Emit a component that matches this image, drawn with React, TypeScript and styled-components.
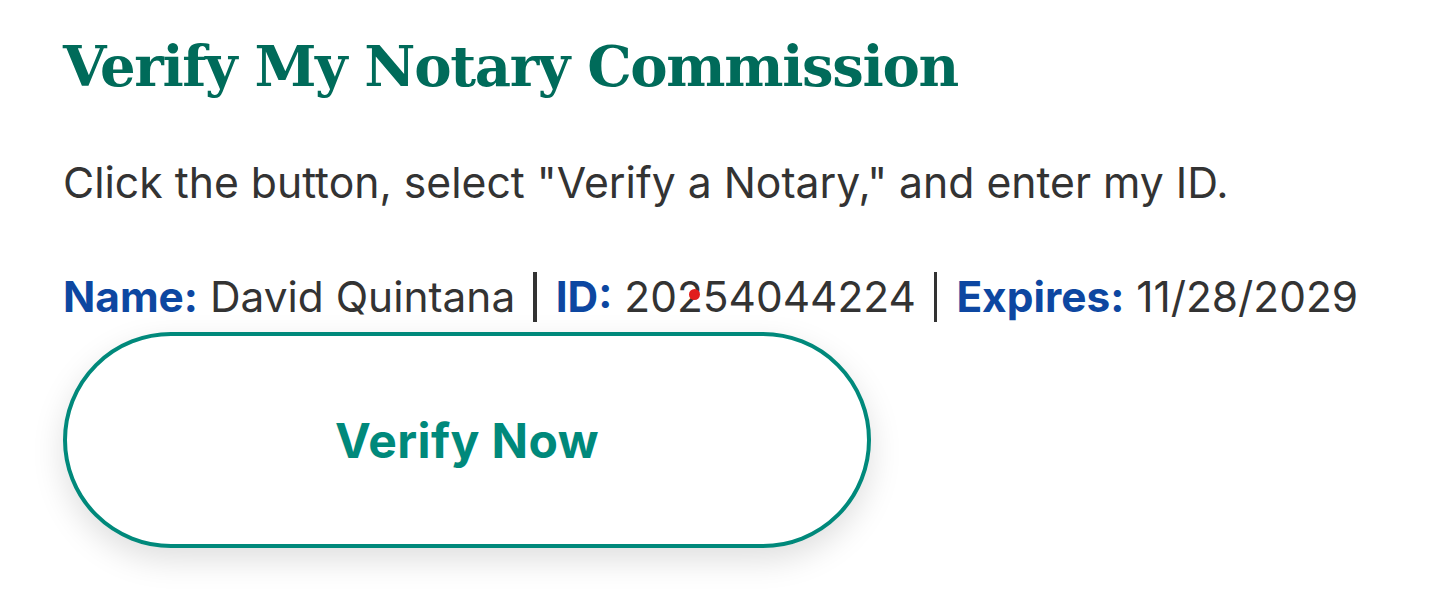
import React from "react";
import styled, { createGlobalStyle } from "styled-components";

const Global = createGlobalStyle`
  html, body { margin: 0; padding: 0; background: #ffffff; }
  body { font-family: Inter, "Noto Sans", sans-serif; color: #333333; }
`;

const Page = styled.main`
  padding: 16px 63px 50px 63px;
  display: flex;
  flex-direction: column;
  align-items: flex-start;
  position: relative;
`;

const Title = styled.h1`
  margin: 0;
  font-family: "DejaVu Serif", "Liberation Serif", serif;
  font-weight: 700;
  font-size: 56px;
  line-height: 100px;
  color: #006b5a;
  letter-spacing: -1.35px;
  white-space: nowrap;
`;

const Lead = styled.p`
  margin: 41px 0 0 0;
  font-size: 42.7px;
  line-height: 52px;
  color: #333333;
  white-space: nowrap;
`;

const Info = styled.p`
  margin: 62px 0 0 0;
  font-size: 42.4px;
  line-height: 52px;
  color: #333333;
  display: flex;
  align-items: center;
  white-space: pre;
`;

const Label = styled.span`
  color: #0d47a1;
  font-weight: 700;
`;

const Sep = styled.span`
  display: inline-block;
  width: 3.5px;
  height: 50px;
  background: #333333;
  margin: 0 19px 0 18px;
`;

const Button = styled.button`
  margin-top: 9px;
  width: 808px;
  height: 216px;
  box-sizing: border-box;
  border: 4px solid #00897b;
  border-radius: 999px;
  background: #ffffff;
  color: #00897b;
  font-family: Inter, "Noto Sans", sans-serif;
  font-weight: 700;
  font-size: 48px;
  letter-spacing: 0.4px;
  box-shadow: 0 12px 32px rgba(0, 0, 0, 0.13);
  cursor: pointer;
`;

const Dot = styled.span`
  position: absolute;
  left: 689px;
  top: 289px;
  width: 11px;
  height: 11px;
  border-radius: 50%;
  background: #e11d1d;
`;

export default function App() {
  return (
    <>
      <Global />
      <Page>
        <Title>Verify My Notary Commission</Title>
        <Lead>Click the button, select "Verify a Notary," and enter my ID.</Lead>
        <Info>
          <Label>Name:</Label> David Quintana<Sep />
          <Label>ID:</Label> 20254044224<Sep />
          <Label>Expires:</Label> 11/28/2029
        </Info>
        <Button>Verify Now</Button>
        <Dot />
      </Page>
    </>
  );
}
